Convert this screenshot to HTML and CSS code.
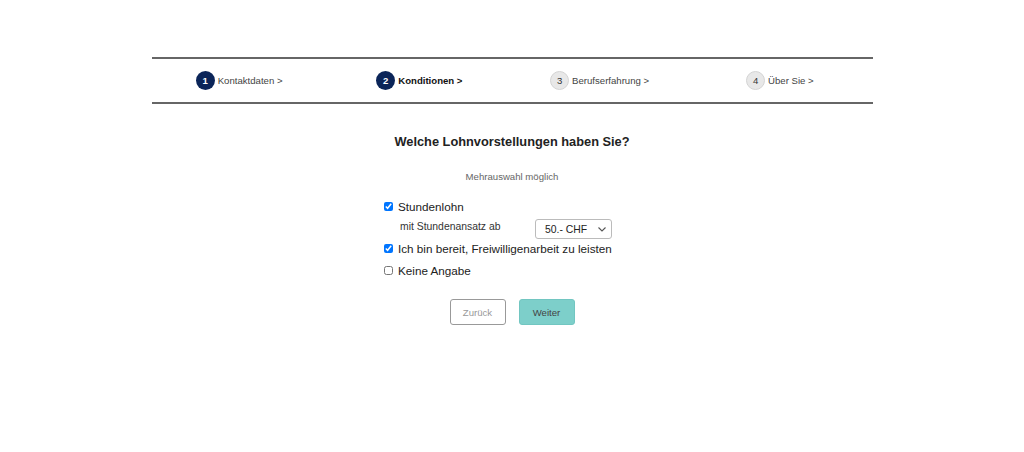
FILE: index.html
```html
<!DOCTYPE html>
<html lang="de">
<head>
    <meta charset="UTF-8">
    <meta name="viewport" content="width=device-width, initial-scale=1.0">
    <title>Konditionen</title>
    <link rel="stylesheet" href="styles.css">
</head>
<body>

<div class="wizard">
    <!-- Step navigation -->
    <div class="steps">
        <div class="step done"><span class="step-num">1</span><span class="step-label">Kontaktdaten &gt;</span></div>
        <div class="step active"><span class="step-num">2</span><span class="step-label">Konditionen &gt;</span></div>
        <div class="step"><span class="step-num">3</span><span class="step-label">Berufserfahrung &gt;</span></div>
        <div class="step"><span class="step-num">4</span><span class="step-label">Über Sie &gt;</span></div>
    </div>

    <h1 class="question">Welche Lohnvorstellungen haben Sie?</h1>
    <p class="hint">Mehrauswahl möglich</p>

    <!-- Options -->
    <form class="options">
        <label class="option">
            <input type="checkbox" checked>
            <span>Stundenlohn</span>
        </label>
        <div class="sub-option">
            <span class="sub-label">mit Stundenansatz ab</span>
            <span class="select-wrap">
                <select class="rate">
                    <option>50.- CHF</option>
                    <option>60.- CHF</option>
                    <option>70.- CHF</option>
                </select>
                <svg class="chevron" width="8" height="5" viewBox="0 0 8 5">
                    <path d="M0.5 0.5 L4 4 L7.5 0.5" fill="none" stroke="#555" stroke-width="1.1"/>
                </svg>
            </span>
        </div>
        <label class="option">
            <input type="checkbox" checked>
            <span>Ich bin bereit, Freiwilligenarbeit zu leisten</span>
        </label>
        <label class="option">
            <input type="checkbox">
            <span>Keine Angabe</span>
        </label>
    </form>

    <div class="actions">
        <button class="btn btn-back" type="button">Zurück</button>
        <button class="btn btn-next" type="button">Weiter</button>
    </div>
</div>

</body>
</html>
```

FILE: styles.css
```css
body {
    font-family: "Liberation Sans", Arial, sans-serif;
    background-color: #fff;
    color: #222;
    margin: 0;
    padding: 0;
}
.wizard {
    width: 721px;
    margin: 57px auto 0;
}
.steps {
    display: grid;
    grid-template-columns: repeat(4, 1fr);
    height: 43px;
    border-top: 2px solid #666;
    border-bottom: 2px solid #666;
}
.step {
    display: flex;
    justify-content: center;
    align-items: center;
    gap: 3px;
    padding-right: 5px;
    font-size: 9.6px;
    color: #444;
}
.step-num {
    display: flex;
    justify-content: center;
    align-items: center;
    width: 17px;
    height: 17px;
    border-radius: 50%;
    border: 1px solid #d4d4d4;
    background-color: #e8e8e8;
    color: #333;
}
.step.done .step-num,
.step.active .step-num {
    width: 19px;
    height: 19px;
    border: none;
    background-color: #0b2559;
    color: #fff;
    font-weight: bold;
}
.step.active .step-label {
    font-weight: bold;
    color: #111;
}
.question {
    font-size: 12.8px;
    text-align: center;
    margin: 30px 0 0;
    color: #222;
}
.hint {
    font-size: 9.6px;
    text-align: center;
    color: #666;
    margin: 22px 0 0;
}
.options {
    width: 256px;
    margin: 13px auto 0;
}
.option {
    display: flex;
    align-items: center;
    gap: 5px;
    height: 22px;
    font-size: 11.7px;
    color: #222;
}
.option input {
    width: 9px;
    height: 9px;
    margin: 0;
}
.sub-option {
    display: flex;
    align-items: flex-start;
    height: 20px;
    padding-left: 16px;
    font-size: 10.4px;
    color: #333;
}
.sub-label {
    width: 135px;
    line-height: 20px;
}
.select-wrap {
    position: relative;
    display: block;
    margin-top: 2px;
}
.rate {
    display: block;
    width: 77px;
    height: 20px;
    padding: 0 0 0 9px;
    font-family: "Liberation Sans", Arial, sans-serif;
    font-size: 10.4px;
    color: #222;
    background-color: #fff;
    border: 1px solid #bbb;
    border-radius: 3px;
    appearance: none;
    -webkit-appearance: none;
}
.chevron {
    position: absolute;
    right: 6px;
    top: 8px;
    pointer-events: none;
}
.actions {
    display: flex;
    justify-content: center;
    gap: 13px;
    margin-top: 18px;
}
.btn {
    width: 56px;
    height: 26px;
    padding: 0;
    font-family: "Liberation Sans", Arial, sans-serif;
    font-size: 9.6px;
    border-radius: 3px;
    cursor: pointer;
}
.btn-back {
    background-color: #fff;
    border: 1px solid #999;
    color: #999;
}
.btn-next {
    background-color: #7dcfca;
    border: 1px solid #72c6c1;
    color: #444;
}
```
